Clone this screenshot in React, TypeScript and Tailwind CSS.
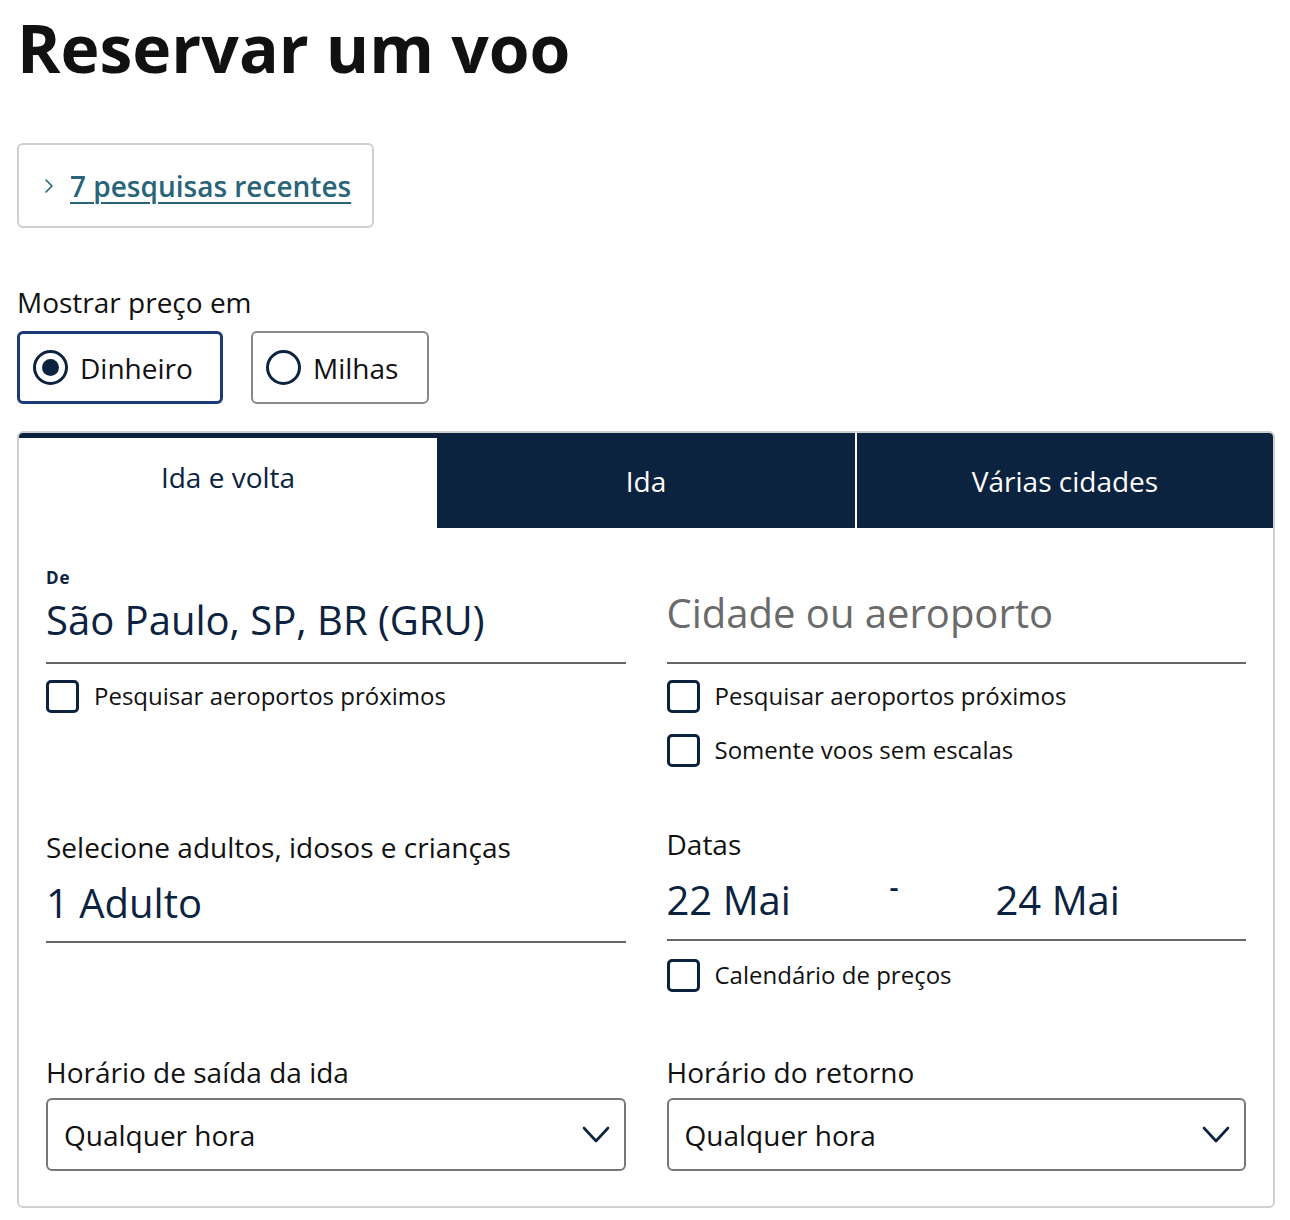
import React, { useState } from 'react';

const Checkbox = ({ label }: { label: string }) => (
  <label className="flex items-center gap-[15px] h-[32px]">
    <span className="w-[33px] h-[33px] rounded-[5px] border-[3px] border-[#0c2340] shrink-0" />
    <span className="text-[24px] text-[#111]">{label}</span>
  </label>
);

const Chevron = () => (
  <svg width="28" height="18" viewBox="0 0 28 18" fill="none">
    <path d="M2 2l12 13L26 2" stroke="#0c2340" strokeWidth="2.6" strokeLinecap="round" strokeLinejoin="round" />
  </svg>
);

const TimeSelect = ({ label }: { label: string }) => (
  <div className="flex flex-col">
    <span className="text-[28px] text-[#111] leading-[36px]">{label}</span>
    <div className="mt-[8px] h-[73px] border-2 border-[#777] rounded-[6px] flex items-center justify-between pl-[16px] pr-[14px]">
      <span className="text-[28px] text-[#111]">Qualquer hora</span>
      <Chevron />
    </div>
  </div>
);

export default function App() {
  const [tab, setTab] = useState(0);
  const tabs = ['Ida e volta', 'Ida', 'Várias cidades'];

  return (
    <div className="bg-white min-h-[1220px] px-[17px] pt-[5px] font-['Open_Sans',sans-serif] text-[#111]">
      <h1 className="text-[66px] font-bold leading-[84px] text-[#111]">Reservar um voo</h1>

      {/* Recent searches */}
      <div className="mt-[54px] w-[357px] h-[85px] border-2 border-[#d0d0d0] rounded-[6px] flex items-center pl-[24px] gap-[15px]">
        <svg width="12" height="16" viewBox="0 0 12 16" fill="none">
          <path d="M3 2l6 6-6 6" stroke="#2a6478" strokeWidth="1.6" strokeLinecap="round" strokeLinejoin="round" />
        </svg>
        <a className="text-[28px] font-semibold text-[#2a6478] underline underline-offset-[5px] decoration-2">7 pesquisas recentes</a>
      </div>

      {/* Price type */}
      <div className="mt-[58px] text-[28px] leading-[32px]">Mostrar preço em</div>
      <div className="mt-[13px] flex gap-[28px]">
        <div className="w-[206px] h-[73px] border-[3px] border-[#1b3a7a] rounded-[6px] flex items-center pl-[13px] gap-[12px]">
          <span className="w-[35px] h-[35px] rounded-full border-[3px] border-[#0c2340] flex items-center justify-center">
            <span className="w-[17px] h-[17px] rounded-full bg-[#0c2340]" />
          </span>
          <span className="text-[28px]">Dinheiro</span>
        </div>
        <div className="w-[178px] h-[73px] border-2 border-[#888] rounded-[6px] flex items-center pl-[13px] gap-[12px]">
          <span className="w-[35px] h-[35px] rounded-full border-[3px] border-[#0c2340]" />
          <span className="text-[28px]">Milhas</span>
        </div>
      </div>

      {/* Search card */}
      <div className="mt-[27px] w-[1258px] border-2 border-[#d0d0d0] rounded-[6px] overflow-hidden">
        <div className="grid grid-cols-3 h-[95px]">
          {tabs.map((t, i) => (
            <button
              key={t}
              onClick={() => setTab(i)}
              className={
                tab === i
                  ? 'bg-white border-t-[5px] border-[#0c2340] text-[#0c2340] text-[28px] pb-[12px]'
                  : i === 2
                  ? 'bg-[#0c2340] text-white text-[28px] border-l-2 border-white'
                  : 'bg-[#0c2340] text-white text-[28px]'
              }
            >
              {t}
            </button>
          ))}
        </div>

        <div className="grid grid-cols-2 gap-x-[41px] px-[27px] pt-[39px] pb-[35px]">
          {/* From */}
          <div className="flex flex-col">
            <span className="text-[17px] font-bold text-[#0c2340] leading-[22px] tracking-[1px]">De</span>
            <div className="h-[75px] border-b-2 border-[#666] flex items-end pb-[18px]">
              <span className="text-[40px] leading-[48px] text-[#0c2340]">São Paulo, SP, BR (GRU)</span>
            </div>
            <div className="mt-[16px] flex flex-col gap-[22px]">
              <Checkbox label="Pesquisar aeroportos próximos" />
            </div>
          </div>
          {/* To */}
          <div className="flex flex-col">
            <div className="h-[97px] border-b-2 border-[#666] flex items-end pb-[25px]">
              <span className="text-[40px] leading-[48px] text-[#6a6a6a]">Cidade ou aeroporto</span>
            </div>
            <div className="mt-[16px] flex flex-col gap-[22px]">
              <Checkbox label="Pesquisar aeroportos próximos" />
              <Checkbox label="Somente voos sem escalas" />
            </div>
          </div>

          {/* Travellers */}
          <div className="flex flex-col mt-[63px]">
            <span className="text-[28px] leading-[36px]">Selecione adultos, idosos e crianças</span>
            <div className="h-[78px] border-b-2 border-[#666] flex items-end pb-[14px]">
              <span className="text-[40px] leading-[48px] text-[#0c2340]">1 Adulto</span>
            </div>
          </div>
          {/* Dates */}
          <div className="flex flex-col mt-[60px]">
            <span className="text-[28px] leading-[36px]">Datas</span>
            <div className="h-[79px] border-b-2 border-[#666] flex items-end pb-[15px] text-[40px] leading-[48px] text-[#0c2340]">
              <span className="w-[223px]">22 Mai</span>
              <span className="w-[106px] text-[28px] font-semibold self-start mt-[0px]">-</span>
              <span>24 Mai</span>
            </div>
            <div className="mt-[18px]">
              <Checkbox label="Calendário de preços" />
            </div>
          </div>

          <div className="mt-[63px]">
            <TimeSelect label="Horário de saída da ida" />
          </div>
          <div className="mt-[63px]">
            <TimeSelect label="Horário do retorno" />
          </div>
        </div>
      </div>
    </div>
  );
}
